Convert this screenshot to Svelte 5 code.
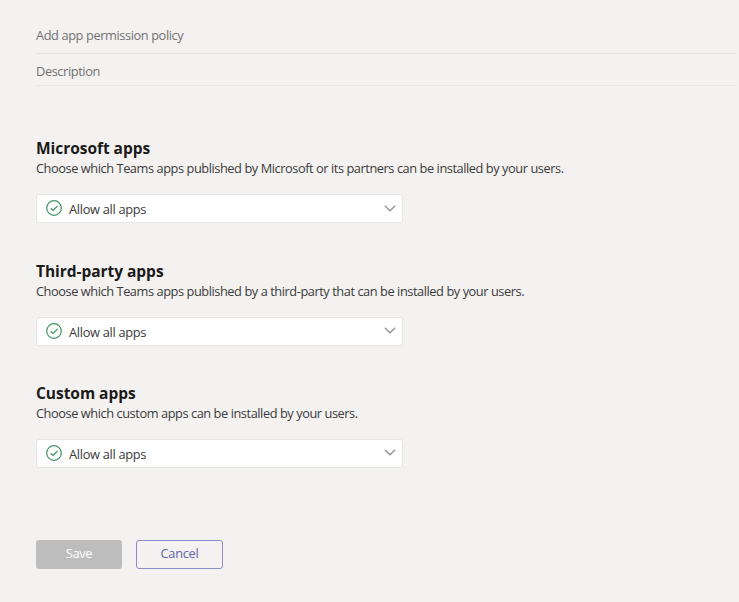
<script>
  const sections = [
    { title: 'Microsoft apps', text: 'Choose which Teams apps published by Microsoft or its partners can be installed by your users.' },
    { title: 'Third-party apps', text: 'Choose which Teams apps published by a third-party that can be installed by your users.' },
    { title: 'Custom apps', text: 'Choose which custom apps can be installed by your users.' }
  ];
</script>

<main>
  <div class="field name">Add app permission policy</div>
  <div class="field description">Description</div>

  <div class="sections">
    {#each sections as section}
      <section>
        <h2>{section.title}</h2>
        <p>{section.text}</p>
        <button class="select" type="button">
          <svg class="check" viewBox="0 0 16 16" fill="none" stroke="#3f9462">
            <circle cx="8" cy="8" r="7.3" stroke-width="1.2" />
            <path d="M4.7 8.2 7 10.4 11.6 5.9" stroke-width="1.3" />
          </svg>
          <span class="value">Allow all apps</span>
          <svg class="chevron" viewBox="0 0 12 7" fill="none" stroke="#8b8f94">
            <path d="M.8.8 6 5.8 11.2.8" stroke-width="1.2" />
          </svg>
        </button>
      </section>
    {/each}
  </div>

  <div class="actions">
    <button class="save" type="button">Save</button>
    <button class="cancel" type="button">Cancel</button>
  </div>
</main>

<style>
  :global(body) {
    margin: 0;
    background: #f3f2f1;
  }
  main {
    box-sizing: border-box;
    height: 602px;
    padding: 16px 2px 0 36px;
    overflow: hidden;
    background: #f3f2f1;
    color: #3b3a39;
    font: 12.8px/18px 'Segoe UI', 'Open Sans', 'Noto Sans', sans-serif;
    letter-spacing: -0.4px;
  }
  .field {
    box-sizing: border-box;
    display: flex;
    align-items: center;
    color: #73716f;
    border-bottom: 1px solid #e6e5e4;
  }
  .name {
    height: 38px;
  }
  .description {
    height: 32px;
    padding-top: 3px;
    border-color: #e8e7e6;
  }
  .sections {
    padding-top: 52.2px;
  }
  section {
    height: 122.4px;
  }
  h2 {
    margin: 0;
    color: #1b1a19;
    font-size: 15.5px;
    font-weight: 700;
    line-height: 21px;
    letter-spacing: -0.04px;
  }
  p {
    margin: 0;
    height: 35px;
    line-height: 18.6px;
    letter-spacing: -0.438px;
    white-space: nowrap;
  }
  button {
    box-sizing: border-box;
    font: inherit;
    letter-spacing: -0.3px;
  }
  .select {
    display: flex;
    align-items: center;
    width: 367px;
    height: 29px;
    padding: 0 6px 0 9px;
    color: #3b3a39;
    background: #fff;
    border: 1px solid #e6e5e4;
    border-radius: 3px;
  }
  .check {
    width: 16px;
    height: 16px;
    margin-right: 7px;
    margin-bottom: 1px;
  }
  .value {
    padding-top: 1px;
  }
  .chevron {
    width: 12px;
    height: 7px;
    margin-left: auto;
    margin-bottom: 1px;
  }
  .actions {
    display: flex;
    gap: 14px;
    padding-top: 34.2px;
  }
  .save,
  .cancel {
    width: 86px;
    height: 29px;
    padding: 0 0 2px;
    border-radius: 3px;
  }
  .save {
    color: #fff;
    background: #bdbdbd;
    border: 0;
  }
  .cancel {
    width: 87px;
    color: #6264a7;
    background: transparent;
    border: 1px solid #8d8ec4;
  }
</style>
